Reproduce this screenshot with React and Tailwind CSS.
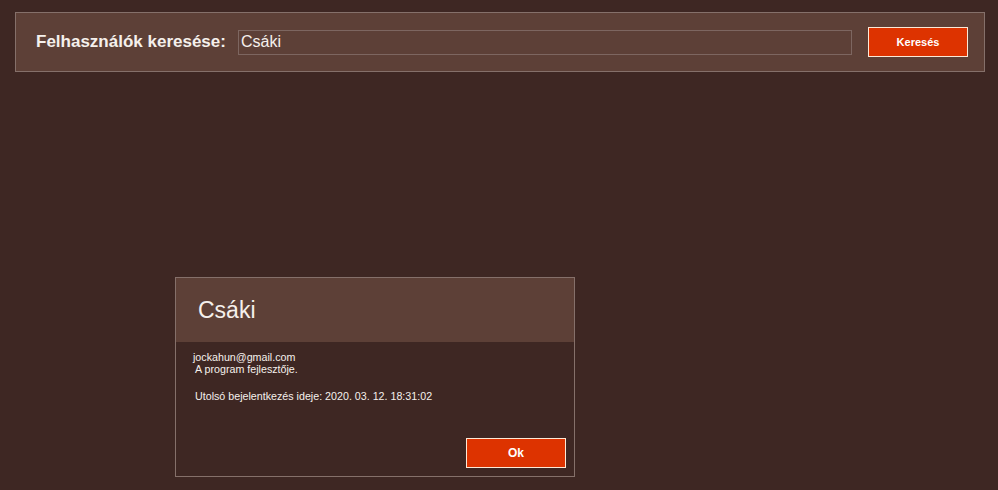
import { useState } from "react";

export default function App() {
  const [query, setQuery] = useState("Csáki");

  return (
    <div
      className="w-[998px] h-[490px] bg-[#3e2723] overflow-hidden flex flex-col items-start text-[#f5f0ec]"
      style={{ fontFamily: '"Liberation Sans", Arial, sans-serif' }}
    >
      <div className="mt-[12px] ml-[15px] w-[970px] h-[60px] bg-[#5d4037] border border-[#85706a] flex items-center pl-[20px] pr-[16px]">
        <label className="text-[17px] font-bold w-[189px] shrink-0 mr-[13px] whitespace-nowrap">
          Felhasználók keresése:
        </label>
        <input
          value={query}
          onChange={(e) => setQuery(e.target.value)}
          className="w-[614px] h-[25px] bg-transparent border border-[#7d6660] px-[2px] text-[16px] text-[#f5f0ec] outline-none"
        />
        <button className="ml-auto w-[100px] h-[30px] bg-[#dd3300] border border-[#fde9d6] text-white text-[11px] font-bold">
          Keresés
        </button>
      </div>

      <div className="mt-[205px] ml-[175px] w-[400px] h-[200px] border border-[#85706a] flex flex-col">
        <div className="h-[64px] bg-[#5d4037] flex items-center pl-[22px] shrink-0">
          <h2 className="text-[23px]">Csáki</h2>
        </div>
        <div className="flex-1 flex flex-col pt-[9px] pl-[17px] pr-[8px] pb-[8px] text-[10.7px] leading-[12px]">
          <p>jockahun@gmail.com</p>
          <p className="pl-[2px]">A program fejlesztője.</p>
          <p className="pl-[2px] mt-[15px]">
            Utolsó bejelentkezés ideje: 2020. 03. 12. 18:31:02
          </p>
          <div className="mt-auto flex justify-end">
            <button className="w-[100px] h-[30px] bg-[#dd3300] border border-[#fde9d6] text-white text-[12px] font-bold">
              Ok
            </button>
          </div>
        </div>
      </div>
    </div>
  );
}
